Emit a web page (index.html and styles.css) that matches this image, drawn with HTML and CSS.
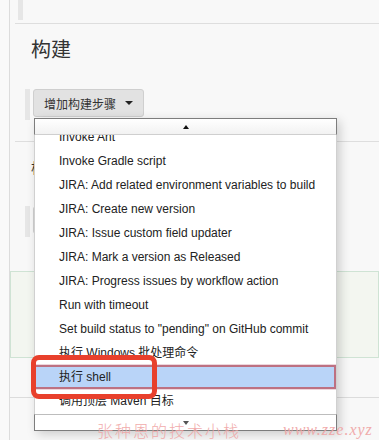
FILE: index.html
```html
<!DOCTYPE html>
<html lang="zh-CN">
<head>
    <meta charset="UTF-8">
    <meta name="viewport" content="width=device-width, initial-scale=1.0">
    <title>构建</title>
    <link rel="stylesheet" href="styles.css">
</head>
<body>
    <div class="page">
        <div class="gutter"></div>
        <div class="panel">
            <div class="prev-section">
                <div class="bar"></div>
            </div>

            <div class="section build">
                <h2>构建</h2>
                <div class="step-row">
                    <div class="bar tall"></div>
                    <button class="add-btn">增加构建步骤 <span class="caret"></span></button>
                </div>
            </div>

            <div class="section post">
                <h3>构建后操作</h3>
                <div class="step-row post-row">
                    <div class="bar tall"></div>
                    <button class="add-btn">增加构建后操作步骤 <span class="caret"></span></button>
                </div>
                <div class="saved-box"></div>
                <div class="footer-gap"></div>
            </div>
        </div>
    </div>

    <div class="menu">
        <div class="scroll-arrow up"><span class="tri-up"></span></div>
        <div class="menu-list">
            <ul class="items">
                <li>Invoke Ant</li>
                <li>Invoke Gradle script</li>
                <li>JIRA: Add related environment variables to build</li>
                <li>JIRA: Create new version</li>
                <li>JIRA: Issue custom field updater</li>
                <li>JIRA: Mark a version as Released</li>
                <li>JIRA: Progress issues by workflow action</li>
                <li>Run with timeout</li>
                <li>Set build status to "pending" on GitHub commit</li>
                <li>执行 Windows 批处理命令</li>
                <li class="selected">执行 shell</li>
                <li>调用顶层 Maven 目标</li>
            </ul>
        </div>
        <div class="scroll-arrow down"><span class="tri-down"></span></div>
    </div>

    <div class="annotation"></div>

    <div class="watermark">
        <span class="wm-name">张种恩的技术小栈</span>
        <span class="wm-url">www.zze.xyz</span>
    </div>
</body>
</html>
```

FILE: styles.css
```css
body {
    margin: 0;
    padding: 0;
    font-family: 'Liberation Sans', Arial, 'Noto Sans CJK SC', sans-serif;
    background: #f8f8f8;
    color: #333;
    overflow: hidden;
    height: 440px;
}
.page {
    display: flex;
    height: 440px;
    overflow: hidden;
}
.gutter {
    width: 9px;
    background: #f9f9f9;
}
.panel {
    flex: 1;
    border-left: 1px solid #dcdcdc;
    background: #f8f8f8;
}
.prev-section {
    height: 23px;
    margin-left: 5px;
    border-bottom: 1px solid #dedede;
}
.bar {
    width: 5px;
    height: 20px;
    margin-left: 3px;
    background: #e6e6e6;
}
.bar.tall {
    height: 31px;
    margin-left: 0;
}
.section {
    padding-left: 21px;
}
.build {
    padding-top: 13px;
    padding-bottom: 21px;
    margin-left: 5px;
    padding-left: 16px;
    border-bottom: 1px solid #dedede;
}
h2 {
    margin: 0 0 28px 0;
    font-size: 20px;
    line-height: 24px;
    font-weight: normal;
    color: #333;
    font-family: 'Noto Sans CJK SC', sans-serif;
}
.step-row {
    display: flex;
    gap: 3px;
    margin-left: -6px;
}
.add-btn {
    height: 28px;
    padding: 0 10px;
    background: #e2e2e2;
    border: 1px solid #cfcfcf;
    border-radius: 3px;
    font-family: 'Noto Sans CJK SC', sans-serif;
    font-size: 12px;
    color: #333;
    display: flex;
    align-items: center;
    gap: 9px;
}
.caret {
    width: 0;
    height: 0;
    border-left: 4px solid transparent;
    border-right: 4px solid transparent;
    border-top: 4px solid #222;
}
.post {
    padding-top: 15px;
}
h3 {
    margin: 0;
    font-size: 14px;
    line-height: 20px;
    font-weight: normal;
    font-family: 'Noto Sans CJK SC', sans-serif;
}
.post-row {
    margin-top: 29px;
}
.saved-box {
    margin: 34px 0 0 -21px;
    height: 85px;
    border: 1px solid #cfe3d4;
    background: #f3f6f0;
}
.footer-gap {
    margin-left: -21px;
    height: 39px;
    border-bottom: 1px solid #dcdcdc;
}

/* dropdown */
.menu {
    position: absolute;
    left: 34px;
    top: 118px;
    width: 303px;
    box-shadow: 3px 3px 10px rgba(0, 0, 0, 0.18);
}
.scroll-arrow {
    height: 15px;
    border: 1px solid #7d7d7d;
    background: linear-gradient(to bottom, #ffffff, #f2f2f2);
    display: flex;
    justify-content: center;
    align-items: center;
}
.scroll-arrow.up {
    border-bottom-color: #cfcfcf;
}
.scroll-arrow.down {
    border-top-color: #bdbdbd;
    background: #fff;
}
.tri-up, .tri-down {
    width: 0;
    height: 0;
    border-left: 3px solid transparent;
    border-right: 3px solid transparent;
}
.tri-up {
    border-bottom: 4px solid #111;
}
.tri-down {
    border-top: 4px solid #555;
}
.menu-list {
    height: 279px;
    overflow: hidden;
    background: #fff;
    border-left: 1px solid #d0d0d0;
    border-right: 1px solid #d0d0d0;
}
.items {
    list-style: none;
    margin: -10px 0 0 0;
    padding: 0;
}
.items li {
    height: 24px;
    line-height: 24px;
    padding-left: 24px;
    font-size: 12px;
    color: #222;
    white-space: nowrap;
    font-family: 'Liberation Sans', Arial, 'Noto Sans CJK SC', sans-serif;
}
.items li.selected {
    background: #b9d4f8;
    box-shadow: inset 0 0 0 2px #bd7182, 0 0 0 1px rgba(200, 120, 140, 0.3);
    margin-left: -1px;
    padding-left: 25px;
}

/* red annotation box */
.annotation {
    position: absolute;
    left: 31px;
    top: 355px;
    width: 126px;
    height: 44px;
    box-sizing: border-box;
    border: 5px solid #e8402c;
    border-radius: 8px;
}

.watermark {
    position: absolute;
    left: 97px;
    top: 420px;
    height: 20px;
    display: flex;
    gap: 42px;
    color: #f0a4a4;
    opacity: 0.9;
    white-space: nowrap;
    line-height: 20px;
}
.wm-name {
    font-family: 'Noto Sans CJK SC', sans-serif;
    font-weight: 300;
    font-size: 16px;
    letter-spacing: 2px;
}
.wm-url {
    font-family: 'Liberation Serif', serif;
    font-style: italic;
    font-size: 16px;
    letter-spacing: 1px;
}
```
